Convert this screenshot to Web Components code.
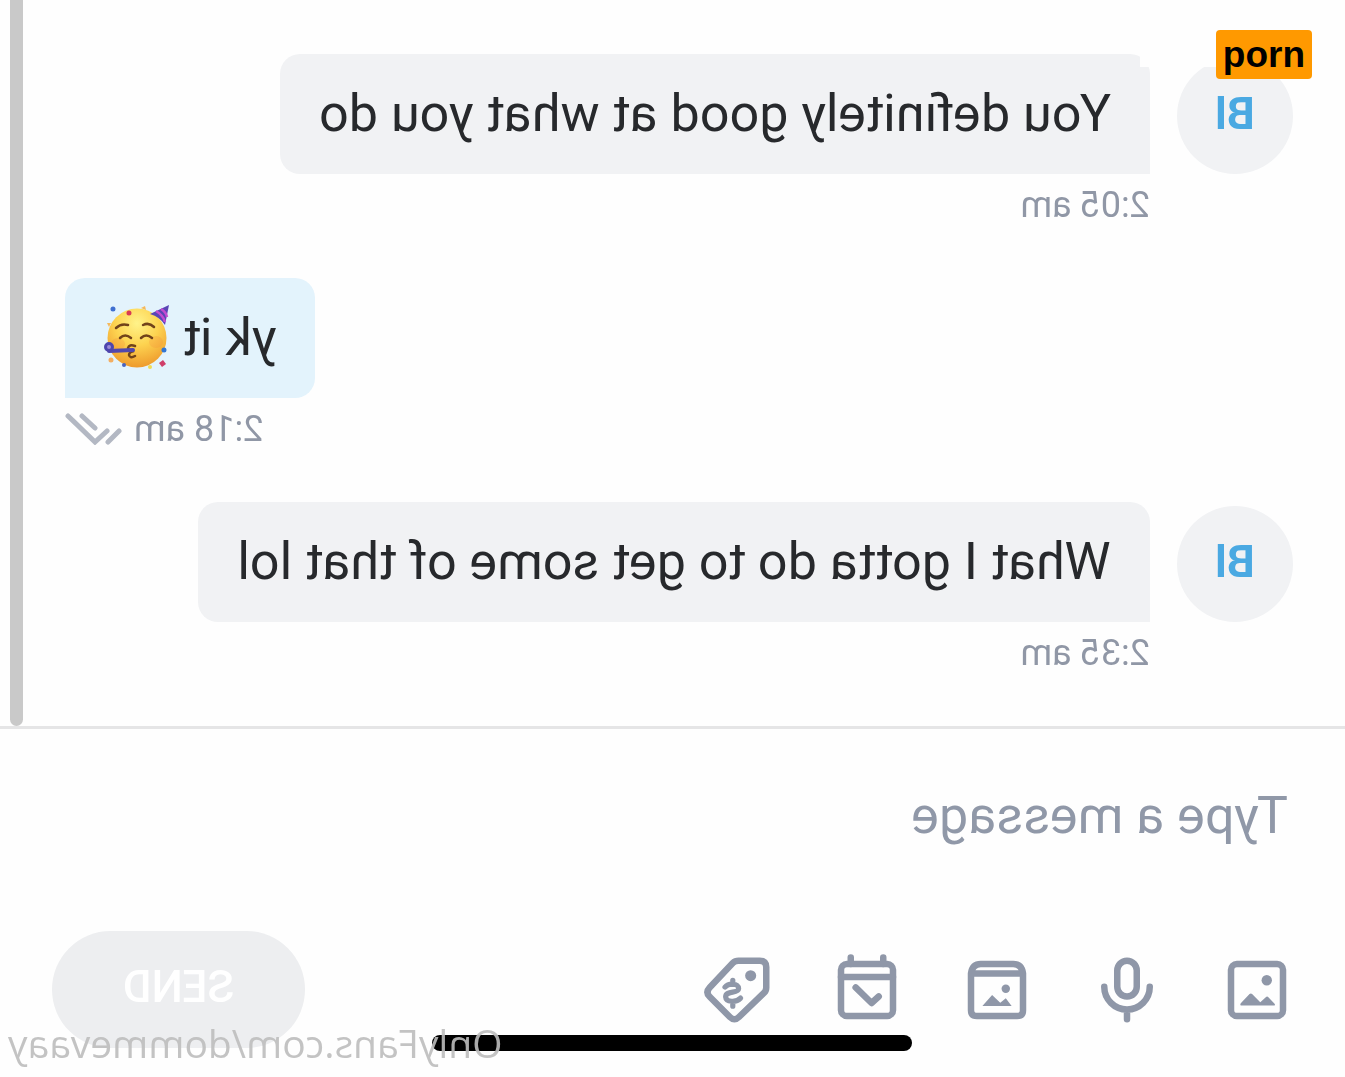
<!DOCTYPE html>
<html lang="en">
<head>
  <meta charset="UTF-8">
  <meta name="viewport" content="width=device-width, initial-scale=1.0">
  <title>Chat</title>
  <style>
    body {
      margin: 0;
      background: #fefefe;
      font-family: Roboto, "Liberation Sans", sans-serif;
    }
  </style>
</head>
<body>
  <flipped-screen>
    <chat-thread>
      <chat-message initials="Bl" time="2:05 am">You definitely good at what you do</chat-message>
      <chat-message mine time="2:18 am">yk it <party-face></party-face></chat-message>
      <chat-message initials="Bl" time="2:35 am">What I gotta do to get some of that lol</chat-message>
    </chat-thread>
    <chat-composer></chat-composer>
    <home-indicator slot="overlay"></home-indicator>
    <water-mark slot="overlay">OnlyFans.com/dommevaay</water-mark>
  </flipped-screen>
  <word-tag>porn</word-tag>

<script type="text/javascript">
function define(name, html) {
  customElements.define(name, class extends HTMLElement {
    constructor() {
      super();
      this.attachShadow({mode: 'open'}).innerHTML = html;
    }
  });
}

// the whole screen is shown mirrored, like a front camera
define('flipped-screen', `
  <style>
    :host {
      display: flex;
      flex-direction: column;
      position: relative;
      min-height: 100vh;
      overflow: hidden;
      transform: scaleX(-1);
    }
  </style>
  <slot></slot>
  <slot name="overlay"></slot>
`);

define('chat-thread', `
  <style>
    :host {
      display: flex;
      flex: 1;
      padding-right: 10px;
    }
    .list {
      display: flex;
      flex: 1;
      flex-direction: column;
      justify-content: flex-end;
      gap: 52px;
      padding: 52px 42px 52px 52px;
    }
    .scrollbar {
      width: 13px;
      border-radius: 0 0 7px 7px;
      background: #c9c9c9;
    }
  </style>
  <div class="list"><slot></slot></div>
  <div class="scrollbar"></div>
`);

customElements.define('chat-message', class extends HTMLElement {
  constructor() {
    super();
    this.attachShadow({mode: 'open'});
  }

  connectedCallback() {
    const mine = this.hasAttribute('mine');
    const avatar = mine ? '' : `<div class="avatar">${this.getAttribute('initials')}</div>`;
    const ticks = mine ? `
      <svg width="57" height="32" viewBox="0 0 57 32" fill="none" stroke="#b3b8c3" stroke-width="5" stroke-linecap="round">
        <path d="M54 3 27 29 15 18M40 3 27 15M14 29 3 18"/>
      </svg>` : '';
    this.shadowRoot.innerHTML = `
      <style>
        :host {
          display: flex;
          align-items: flex-start;
          gap: 27px;
        }
        :host([mine]) {
          justify-content: flex-end;
        }
        .avatar {
          width: 116px;
          height: 116px;
          margin-top: 4px;
          border-radius: 50%;
          background: #f1f2f4;
          color: #4aa9e2;
          font-size: 44px;
          font-weight: 700;
          line-height: 112px;
          text-align: center;
        }
        .body {
          display: flex;
          flex-direction: column;
          align-items: flex-start;
          gap: 10px;
        }
        .bubble {
          padding: 30px 39px;
          border-radius: 20px 20px 20px 0;
          background: #f1f2f4;
          color: #27292c;
          font-size: 52px;
          line-height: 60px;
        }
        .meta {
          display: flex;
          align-items: center;
          gap: 12px;
          color: #9097a6;
          font-size: 36px;
          line-height: 42px;
        }
        :host([mine]) .body {
          align-items: flex-end;
        }
        :host([mine]) .bubble {
          border-radius: 20px 20px 0 20px;
          background: #e3f3fc;
        }
      </style>
      ${avatar}
      <div class="body">
        <div class="bubble"><slot></slot></div>
        <div class="meta"><time>${this.getAttribute('time')}</time>${ticks}</div>
      </div>
    `;
  }
});

define('party-face', `
  <style>
    :host {
      display: inline-block;
      width: 66px;
      height: 64px;
      margin: -6px 0;
      vertical-align: -8px;
    }
    svg {
      display: block;
    }
  </style>
  <svg width="66" height="64" viewBox="0 0 66 64" role="img" aria-label="Partying face">
    <defs>
      <radialGradient id="skin" cx=".5" cy=".25" r=".75">
        <stop offset="0" stop-color="#fff38a"/>
        <stop offset=".5" stop-color="#fdd350"/>
        <stop offset="1" stop-color="#ee9a2c"/>
      </radialGradient>
    </defs>
    <g transform="translate(66 0) scale(-1 1)">
      <circle cx="33" cy="33" r="29.500" fill="url(#skin)"/>
      <ellipse cx="14" cy="39" rx="7" ry="6" fill="#f58a3c" opacity=".25"/>
      <ellipse cx="52" cy="37" rx="7" ry="6" fill="#f58a3c" opacity=".25"/>
      <path d="M46 9 65 0 61 20Q56 12 46 9Z" fill="#5a45b5"/>
      <path d="M52 6Q59 10 61 17M57 4Q62 7 63 12" fill="none" stroke="#c44bd0" stroke-width="2.500"/>
      <g fill="none" stroke="#71431a" stroke-width="2.500" stroke-linecap="round">
        <path d="M12 23Q17 18 24 20M39 20Q45 17 50 22"/>
        <path d="M16 33Q21 28 27 33M37 33Q42 28 48 33"/>
        <path d="M31 41Q25 39 24 43Q24 45 30 46Q25 47 25 50Q26 54 31 51"/>
      </g>
      <path d="M29 45 5 46" stroke="#5147ad" stroke-width="4" stroke-linecap="round"/>
      <circle cx="5" cy="42" r="3.500" fill="#9b8ad8" stroke="#4d45ad" stroke-width="3"/>
      <circle cx="9" cy="4" r="2.500" fill="#3f6fd0"/>
      <circle cx="25" cy="8" r="2.500" fill="#d83a55"/>
      <circle cx="60" cy="45" r="2.500" fill="#3276d2"/>
      <circle cx="20" cy="60" r="2" fill="#4863bd"/>
      <circle cx="7" cy="55" r="2.500" fill="#f3ae62"/>
      <path d="M59 55 62 59 58 62 55 58Z" fill="#cf3e69"/>
      <path d="M37 3 41 1 42 5ZM3 18 7 18 5 22Z" fill="#f5b95c"/>
      <circle cx="46" cy="62" r="2" fill="#f1dc52"/>
    </g>
  </svg>
`);

define('chat-composer', `
  <style>
    :host {
      display: flex;
      flex-direction: column;
      gap: 86px;
      padding: 56px 52px 29px 49px;
      border-top: 3px solid #e5e5e6;
    }
    input {
      box-sizing: border-box;
      width: 100%;
      height: 60px;
      padding: 0 8px;
      border: 0;
      outline: 0;
      background: none;
      color: #27292c;
      font: inherit;
      font-size: 52px;
    }
    input::placeholder {
      color: #9098a8;
      opacity: 1;
    }
    .bar {
      display: flex;
      align-items: center;
      justify-content: space-between;
    }
    .tools {
      display: flex;
      gap: 52px;
    }
    button {
      padding: 0;
      border: 0;
      background: none;
      font: inherit;
    }
    .tools svg {
      display: block;
      width: 78px;
      height: 78px;
      overflow: visible;
      fill: none;
      stroke: #8f97a8;
      stroke-width: 2;
      stroke-linecap: round;
      stroke-linejoin: round;
    }
    .tools .solid {
      fill: #8f97a8;
      stroke: none;
    }
    .send {
      width: 253px;
      height: 117px;
      padding-bottom: 6px;
      border-radius: 59px;
      background: #edeef0;
      color: #fff;
      font-size: 44px;
      font-weight: 500;
    }
  </style>
  <input type="text" placeholder="Type a message" aria-label="Type a message">
  <div class="bar">
    <div class="tools">
      <button type="button" aria-label="Add image">
        <svg viewBox="0 0 24 24">
          <rect x="4" y="4" width="16" height="16" rx="1.800"/>
          <circle class="solid" cx="9" cy="9" r="1.600"/>
          <path class="solid" d="M7 16.800Q6.200 16.800 6.600 16.200L8.500 14.200Q8.900 13.800 9.300 14.200L11 15.800 13.500 13.200Q13.900 12.900 14.300 13.200L17 16.100Q17.400 16.800 16.700 16.800Z"/>
        </svg>
      </button>
      <button type="button" aria-label="Record voice">
        <svg viewBox="0 0 24 24">
          <rect x="9" y="3" width="6" height="11" rx="3"/>
          <path d="M5 11A7 7 0 0 0 19 11M12 18V21"/>
        </svg>
      </button>
      <button type="button" aria-label="Add from vault">
        <svg viewBox="0 0 24 24">
          <path d="M4 6.900V18.200Q4 20 5.800 20H18.200Q20 20 20 18.200V6.900Q19.600 4 17 4H7Q4.400 4 4 6.900ZM4 6.900H20"/>
          <circle class="solid" cx="9.300" cy="11.600" r="1.300"/>
          <path class="solid" d="M7.500 16.900 9.300 14.500 11 15.900 13.500 13.500 16.500 16.900Z"/>
        </svg>
      </button>
      <button type="button" aria-label="Schedule">
        <svg viewBox="0 0 24 24">
          <rect x="4" y="4" width="16" height="16" rx="1.800"/>
          <path d="M4 8H20M7 2V4M17 2V4M8.400 14 10.600 16 15.500 11.200"/>
        </svg>
      </button>
      <button type="button" aria-label="Set price">
        <svg viewBox="0 0 24 24">
          <path d="M3 5Q3 3 5 3H11.500Q12.600 3 13.300 3.700L20.400 11.200Q21.800 12.700 20.400 14.100L14.200 20.300Q12.800 21.700 11.400 20.300L3.700 12.900Q3 12.200 3 11.200Z"/>
          <circle class="solid" cx="7.800" cy="7.600" r="1.700"/>
          <path stroke-width="1.600" d="M15.700 11.100C14.600 9.800 11.400 9.900 11.500 11.600 11.600 13.200 15.500 12.100 15.500 14.100 15.400 15.800 12.200 15.900 10.900 14.500M13.300 9V10.300M13.300 15.500V17"/>
        </svg>
      </button>
    </div>
    <button type="button" class="send">SEND</button>
  </div>
`);

define('home-indicator', `
  <style>
    :host {
      position: absolute;
      bottom: 26px;
      left: 50%;
      width: 480px;
      height: 16px;
      margin-left: -240px;
      border-radius: 8px;
      background: #000;
    }
  </style>
`);

define('water-mark', `
  <style>
    :host {
      position: absolute;
      right: 8px;
      bottom: 8px;
      color: rgba(188, 188, 188, .9);
      font-family: "Open Sans", "Noto Sans", sans-serif;
      font-size: 39px;
      line-height: 52px;
    }
  </style>
  <slot></slot>
`);

define('word-tag', `
  <style>
    :host {
      display: flex;
      position: absolute;
      top: 30px;
      right: 33px;
    }
    .cover {
      width: 76px;
      height: 37px;
      background: #fefefe;
    }
    .label {
      padding: 0 7px;
      border-radius: 4px;
      background: #f90;
      color: #000;
      font: 700 37px/49px "Liberation Sans", Arial, sans-serif;
    }
  </style>
  <div class="cover"></div>
  <div class="label"><slot></slot></div>
`);
</script>
</body>
</html>
